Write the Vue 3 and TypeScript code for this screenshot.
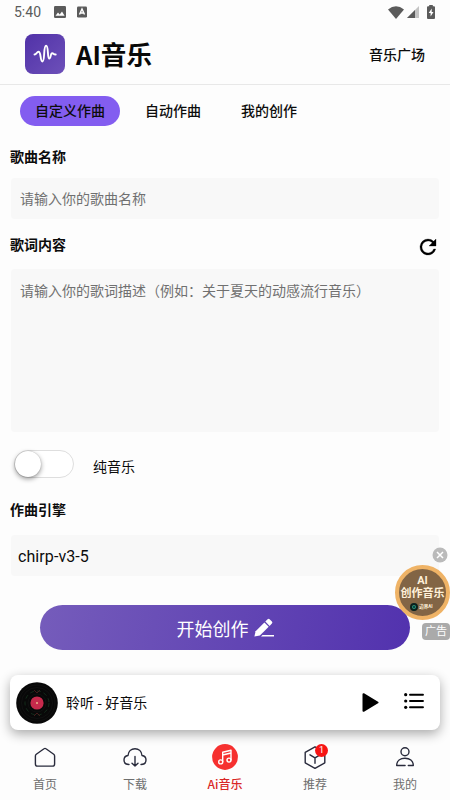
<script setup lang="ts">
import { ref } from 'vue'

const tabs: string[] = ['自定义作曲', '自动作曲', '我的创作']
const activeTab = ref(0)
const title = ref('')
const lyrics = ref('')
const instrumental = ref(false)

interface NavItem {
  id: string
  label: string
  badge?: number
}
const navItems: NavItem[] = [
  { id: 'home', label: '首页' },
  { id: 'download', label: '下载' },
  { id: 'music', label: 'Ai音乐' },
  { id: 'recommend', label: '推荐', badge: 1 },
  { id: 'mine', label: '我的' },
]
const activeNav = ref('music')
</script>

<template>
  <div class="app">
    <div class="status">
      <span class="clock">5:40</span>
      <svg class="st-img" width="12" height="12" viewBox="0 0 12 12">
        <rect width="12" height="12" rx="1.2" fill="#5b5b5b" />
        <path d="M1.5 9.8 4 6.6l1.7 2L8 5.6l2.6 4.2z" fill="#fff" />
      </svg>
      <svg class="st-a" width="10" height="12" viewBox="0 0 10 12">
        <rect y=".5" width="10" height="11" rx="1.2" fill="#5b5b5b" />
        <path d="M2.5 8.5 5 3l2.5 5.5M3.5 7h3" fill="none" stroke="#fff" stroke-width="1.4" />
      </svg>
      <div class="st-right">
        <svg width="16" height="13" viewBox="0 0 16 13">
          <path d="M0 3.4Q8-2.8 16 3.4L8 13z" fill="#5b5b5b" />
        </svg>
        <svg width="12" height="12" viewBox="0 0 12 12">
          <path d="M12 0v12H0z" fill="#c4c4c4" />
          <path d="M8 4v8H0z" fill="#5b5b5b" />
        </svg>
        <svg class="battery" width="8" height="14" viewBox="0 0 8 14">
          <path d="M2.2 0h3.6v1.3H7q1 0 1 1V13q0 1-1 1H1q-1 0-1-1V2.300q0-1 1-1h1.200z" fill="#5b5b5b" />
          <path d="M4.700 3.500 1.700 8h1.900v3.500L6.500 7H4.700z" fill="#fff" />
        </svg>
      </div>
    </div>

    <header class="header">
      <div class="logo">
        <svg width="24" height="24" viewBox="0 0 24 24">
          <path
            d="M1.500 12.500c2.200 0 2.200-2.700 4-2.700 2.800 0 1.500 9.700 3.900 9.700 2.800 0 .7-15.800 3.700-15.800 2.700 0 1 12.800 3.200 12.800 1.700 0 1.100-5.300 2.900-5.300 1.400 0 1.200 1.500 3.500 1.300"
            fill="none"
            stroke="#fff"
            stroke-width="1.900"
            stroke-linecap="round"
          />
        </svg>
      </div>
      <h1>AI音乐</h1>
      <a class="plaza">音乐广场</a>
    </header>

    <nav class="tabs">
      <button
        v-for="(t, i) in tabs"
        :key="t"
        class="tab"
        :class="{ active: i === activeTab }"
        @click="activeTab = i"
      >
        {{ t }}
      </button>
    </nav>

    <main class="form">
      <h2 class="label name-label">歌曲名称</h2>
      <input v-model="title" class="field" placeholder="请输入你的歌曲名称" />
      <div class="lyric-head">
        <h2 class="label">歌词内容</h2>
        <svg width="24" height="24" viewBox="0 0 24 24">
          <path
            d="M17.650 6.350A7.960 7.960 0 0 0 12 4a8 8 0 1 0 7.730 10h-2.080A6 6 0 1 1 12 6c1.660 0 3.140.69 4.220 1.780L13 11h7V4z"
            fill="#000"
            stroke="#000"
            stroke-width=".3"
          />
        </svg>
      </div>
      <textarea v-model="lyrics" class="field area" placeholder="请输入你的歌词描述（例如：关于夏天的动感流行音乐）"></textarea>
      <div class="switch-row">
        <button class="switch" :class="{ on: instrumental }" @click="instrumental = !instrumental">
          <span class="knob"></span>
        </button>
        <span>纯音乐</span>
      </div>
      <h2 class="label engine-label">作曲引擎</h2>
      <div class="field engine">chirp-v3-5</div>
      <button class="create">
        <span>开始创作</span>
        <svg width="20" height="20" viewBox="0 0 20 20" fill="#fff">
          <path d="M.4 18.500 1.600 13.300 10.400 4.500l4.300 4.300L5.900 17.500z" />
          <path d="M11.300 3.600 13.600 1.300q1-1 2 0l2.300 2.300q1 1 0 2L15.600 7.900z" />
          <path d="M8.500 17H20v1.500H7z" />
        </svg>
      </button>
    </main>

    <section class="player">
      <svg class="disc" width="42" height="42" viewBox="0 0 42 42">
        <circle cx="21" cy="21" r="20.800" fill="#080808" />
        <g fill="none" stroke="#181818" stroke-width=".5">
          <circle cx="21" cy="21" r="18" />
          <circle cx="21" cy="21" r="15.500" />
          <circle cx="21" cy="21" r="9" />
        </g>
        <circle cx="21" cy="21" r="12" fill="none" stroke="#17351f" stroke-width=".8" stroke-dasharray="4 3" />
        <path d="m18 8 3 3 3-3M18 34l3-3 3 3" fill="none" stroke="#542020" stroke-width=".8" />
        <circle cx="21" cy="21" r="6.600" fill="#c72a4c" />
        <circle cx="21" cy="21" r="1" fill="#edb98b" />
      </svg>
      <span class="track">聆听 - 好音乐</span>
      <svg class="play" width="17" height="19" viewBox="0 0 17 19">
        <path d="M1.500 1.200 15.500 9.500 1.500 17.800z" stroke="#000" stroke-width="2" stroke-linejoin="round" />
      </svg>
      <svg class="list" width="20" height="16" viewBox="0 0 20 16">
        <g stroke="#000" stroke-width="1.900" stroke-linecap="round">
          <path d="M6 1.700h13M6 8h13M6 14.300h13" />
        </g>
        <circle cx="1.700" cy="1.700" r="1.600" />
        <circle cx="1.700" cy="8" r="1.600" />
        <circle cx="1.700" cy="14.300" r="1.600" />
      </svg>
    </section>

    <footer class="bottom">
      <div
        v-for="n in navItems"
        :key="n.id"
        class="nav-item"
        :class="{ current: n.id === activeNav }"
        @click="activeNav = n.id"
      >
        <div class="nav-icon">
          <svg width="26" height="26" viewBox="0 0 26 26" fill="none" stroke="#292b3c" stroke-width="1.400" stroke-linecap="round" stroke-linejoin="round">
            <path v-if="n.id === 'home'" d="M13 4.400q.5 0 1 .4l7.700 5.500q.9.700.9 1.800v7.800q0 2.200-2.200 2.200H5.600q-2.200 0-2.200-2.200v-7.800q0-1.100.9-1.800L12 4.800q.5-.4 1-.4z" />
            <template v-else-if="n.id === 'download'">
              <path d="M7 20.500C3.800 20.500 2 18.400 2 16c0-2.400 1.700-4.200 4-4.500C6.300 7.400 9.300 4.800 13 4.800s6.700 2.600 7 6.700c2.300.3 4 2.100 4 4.500 0 2.400-1.800 4.500-5 4.500" />
              <path d="M13 12.500v9.600m-3-2.900 3 2.900 3-2.900" />
            </template>
            <template v-else-if="n.id === 'music'">
              <circle cx="13" cy="13" r="12.900" fill="#f6302f" stroke="none" />
              <g stroke="#fff" stroke-width="1.400">
                <path d="M10.700 17.700V8.200l8.300-2v9.600M10.700 11l8.300-2" />
                <circle cx="8.700" cy="17.900" r="2" />
                <circle cx="17" cy="16.100" r="2" />
              </g>
            </template>
            <template v-else-if="n.id === 'recommend'">
              <path d="M13 2.800 22.800 8.300v10.500L13 24.300 3.200 18.800V8.300z" />
              <path d="M8 10.800 13 13.800l5-3M13 13.800V19.300" />
            </template>
            <template v-else>
              <circle cx="13" cy="7.700" r="4" />
              <path d="M16.300 21.500h5c0-4.900-3.700-7.300-8.300-7.300s-8.300 2.400-8.300 7.300h8.400" />
            </template>
          </svg>
          <span v-if="n.badge" class="badge">{{ n.badge }}</span>
        </div>
        <span class="nav-label">{{ n.label }}</span>
      </div>
    </footer>

    <aside class="promo">
      <svg class="close" width="16" height="16" viewBox="0 0 16 16">
        <circle cx="8" cy="8" r="7.500" fill="#bababa" />
        <path d="m5 5 6 6m0-6-6 6" stroke="#fff" stroke-width="1.500" />
      </svg>
      <div class="coin">
        <b class="coin-ai">AI</b>
        <b class="coin-text">创作音乐</b>
        <span class="coin-brand"><i></i>边界AI</span>
      </div>
      <span class="ad">广告</span>
    </aside>
  </div>
</template>

<style>
body {
  margin: 0;
  background: #fdfdfd;
}
</style>

<style scoped>
.app {
  position: relative;
  display: flex;
  flex-direction: column;
  width: 450px;
  height: 800px;
  overflow: hidden;
  box-sizing: border-box;
  background: #fdfdfd;
  color: #0c0c0c;
  font-family: Roboto, 'Noto Sans CJK SC', sans-serif;
  font-size: 14px;
}
button,
input,
textarea {
  font: inherit;
  color: inherit;
  border: 0;
  margin: 0;
  padding: 0;
  outline: 0;
  background: none;
  box-sizing: border-box;
}
svg {
  display: block;
  flex: none;
}
.status {
  display: flex;
  align-items: center;
  height: 24px;
  padding: 0 15px 0 14px;
  color: #5b5b5b;
}
.clock {
  width: 40px;
  line-height: 24px;
}
.st-img {
  margin-right: 11px;
}
.st-right {
  display: flex;
  align-items: center;
  gap: 3px;
  margin-left: auto;
}
.battery {
  margin-left: 5px;
}
.header {
  display: flex;
  align-items: center;
  height: 60px;
  padding: 0 25px;
  border-bottom: 1px solid #e8e8e8;
  margin-bottom: 1px;
}
.logo {
  display: flex;
  align-items: center;
  justify-content: center;
  width: 40px;
  height: 40px;
  border-radius: 8px;
  background: linear-gradient(135deg, #5132a8, #6d50b9);
}
h1 {
  margin: 0 0 0 11px;
  font-family: 'Noto Sans CJK SC', sans-serif;
  font-size: 25.600px;
  line-height: 36px;
  font-weight: 700;
  color: #080808;
}
.plaza {
  margin-left: auto;
  font-weight: 500;
}
.tabs {
  display: flex;
  gap: 10px;
  padding: 10px 20px 0;
}
.tab {
  height: 30px;
  padding: 0 15px;
  border-radius: 15px;
  line-height: 30px;
  font-weight: 500;
}
.tab.active {
  background: #835df0;
}
.form {
  display: flex;
  flex-direction: column;
  padding: 0 11px 0 10px;
}
.label {
  margin: 0;
  font-size: 14px;
  line-height: 22px;
  font-weight: 700;
}
.name-label {
  margin-top: 20px;
}
.field {
  display: block;
  height: 41px;
  margin-left: 1px;
  padding: 0 9px;
  border-radius: 4px;
  background: #f8f8f8;
}
.field::placeholder {
  color: #707070;
  opacity: 1;
}
input.field {
  margin-top: 10px;
}
.lyric-head {
  display: flex;
  align-items: center;
  justify-content: space-between;
  height: 24px;
  margin: 15px -1px 0 0;
}
.lyric-head .label {
  margin-top: -3px;
}
.lyric-head svg {
  margin-top: 2px;
}
.area {
  height: 163px;
  margin-top: 11px;
  padding-top: 11px;
  line-height: 22px;
  resize: none;
}
.switch-row {
  display: flex;
  align-items: center;
  gap: 19px;
  height: 28px;
  margin: 18px 0 0 4px;
}
.switch-row > span {
  margin-top: 4px;
}
.switch {
  width: 60px;
  height: 28px;
  border: 1px solid #dedede;
  border-radius: 14px;
  background: #fff;
}
.knob {
  display: block;
  width: 26px;
  height: 26px;
  border-radius: 50%;
  background: #fff;
  box-shadow: 0 2px 5px rgba(0, 0, 0, 0.4), 0 0 1px rgba(0, 0, 0, 0.3);
}
.switch.on .knob {
  margin-left: auto;
}
.engine-label {
  margin-top: 21px;
}
.engine {
  margin-top: 14px;
  padding: 0 7px;
  line-height: 43px;
  font-size: 16px;
  letter-spacing: 0.08px;
}
.create {
  display: flex;
  align-items: center;
  justify-content: center;
  gap: 5px;
  height: 45px;
  margin: 29px 29px 0 30px;
  border-radius: 23px;
  color: #fff;
  font-size: 18px;
  background: linear-gradient(100deg, #755cbb, #5232ae);
}
.player {
  display: flex;
  align-items: center;
  box-sizing: border-box;
  height: 55px;
  margin: 25px 10px 0;
  padding: 0 16px 0 6px;
  border-radius: 8px;
  background: #fff;
  box-shadow: 0 4px 12px rgba(0, 0, 0, 0.33);
}
.track {
  margin: -2px 0 0 8px;
  font-family: 'Noto Sans CJK SC', sans-serif;
}
.play {
  margin-left: auto;
}
.list {
  margin: -3px 0 0 25px;
}
.bottom {
  display: flex;
  height: 70px;
}
.nav-item {
  display: flex;
  flex: 1;
  flex-direction: column;
  align-items: center;
  padding-top: 14px;
}
.nav-icon {
  position: relative;
}
.nav-label {
  margin-top: 5px;
  font-family: 'Noto Sans CJK SC', sans-serif;
  font-size: 12px;
  line-height: 18px;
  color: #6e6e6e;
}
.current .nav-label {
  color: #d92727;
  font-weight: 500;
}
.badge {
  position: absolute;
  top: 0;
  right: 0;
  width: 13px;
  height: 13px;
  border-radius: 50%;
  background: #f61414;
  color: #fff;
  font-size: 9px;
  line-height: 13px;
  text-align: center;
}
.promo {
  position: absolute;
  top: 547px;
  right: 0;
  display: flex;
  flex-direction: column;
  align-items: flex-end;
}
.close {
  margin-right: 2px;
}
.coin {
  display: flex;
  flex-direction: column;
  align-items: center;
  box-sizing: border-box;
  width: 55px;
  height: 55px;
  margin-top: 2px;
  padding-top: 6px;
  border: 4px solid #efb366;
  border-radius: 50%;
  background: #826545;
  color: #fff0d8;
}
.coin-ai {
  font-size: 11px;
  line-height: 12px;
}
.coin-text {
  font-size: 11px;
  line-height: 14px;
  white-space: nowrap;
}
.coin-brand {
  display: flex;
  align-items: center;
  gap: 3px;
  margin-top: 2px;
  font-size: 4.500px;
  line-height: 7px;
  font-weight: 700;
  white-space: nowrap;
}
.coin-brand i {
  width: 2px;
  height: 2px;
  border: 1px solid #17a78e;
  border-radius: 50%;
  outline: 2px solid #09211e;
  background: #09211e;
}
.ad {
  width: 28px;
  height: 17px;
  margin-top: 3px;
  border-radius: 4px;
  background: #aaa;
  color: #fff;
  font-size: 11px;
  line-height: 17px;
  text-align: center;
}
</style>
